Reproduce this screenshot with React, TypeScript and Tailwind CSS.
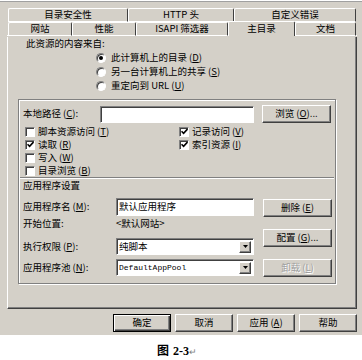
import type { ReactNode } from 'react'

const raised =
  'border border-t-white border-l-white border-r-[#404040] border-b-[#404040] shadow-[inset_-1px_-1px_0_#808080]'
const sunken =
  'border border-t-[#808080] border-l-[#808080] border-r-white border-b-white shadow-[inset_1px_1px_0_#404040]'

function Mn({ k }: { k: string }) {
  return (
    <span className="ml-[2px]">
      (<span className="underline">{k}</span>)
    </span>
  )
}

function Tab({ label, w, active }: { label: string; w: string; active?: boolean }) {
  return (
    <div
      className={`${w} flex h-[14px] shrink-0 items-center justify-center rounded-t-[2px] border-l border-r border-t border-l-white border-r-[#404040] border-t-white ${
        active ? 'relative -mt-[1px] h-[15px] bg-[#d4d0c8]' : 'border-b border-b-white'
      }`}
    >
      {label}
    </div>
  )
}

function Radio({ checked, children }: { checked?: boolean; children: ReactNode }) {
  return (
    <div className="flex h-[14px] items-center gap-[5px]">
      <span
        className={`flex h-[10px] w-[10px] items-center justify-center rounded-full bg-white ${sunken}`}
      >
        {checked && <span className="h-[4px] w-[4px] rounded-full bg-black" />}
      </span>
      <span>{children}</span>
    </div>
  )
}

function Check({ checked, children }: { checked?: boolean; children?: ReactNode }) {
  if (!children) return <div className="h-[13px]" />
  return (
    <div className="flex h-[13px] items-center gap-[3px]">
      <span className={`flex h-[10px] w-[10px] items-center justify-center bg-white ${sunken}`}>
        {checked && (
          <svg width="7" height="7" viewBox="0 0 7 7">
            <path d="M0.5 3.2 L2.6 5.4 L6.5 1" stroke="#000" strokeWidth="1.6" fill="none" />
          </svg>
        )}
      </span>
      <span>{children}</span>
    </div>
  )
}

function Button({
  children,
  w = 'w-[69px]',
  disabled,
  isDefault,
}: {
  children: ReactNode
  w?: string
  disabled?: boolean
  isDefault?: boolean
}) {
  return (
    <div
      className={`${w} flex h-[18px] shrink-0 items-center justify-center ${
        isDefault
          ? 'border border-black shadow-[inset_1px_1px_0_white,inset_-1px_-1px_0_#404040,inset_-2px_-2px_0_#808080]'
          : raised
      } ${disabled ? 'text-[#a0a0a0] [text-shadow:1px_1px_0_white]' : ''}`}
    >
      {children}
    </div>
  )
}

function Select({ value, mono }: { value: string; mono?: boolean }) {
  return (
    <div className={`flex h-[17px] w-[138px] items-center bg-white pl-[2px] pr-[2px] ${sunken}`}>
      <span
        className={`flex-1 whitespace-nowrap leading-[13px] ${mono ? "font-['Liberation_Mono',monospace] text-[8px]" : ''}`}
      >
        {value}
      </span>
      <span className={`flex h-[12px] w-[12px] items-center justify-center bg-[#d4d0c8] ${raised}`}>
        <svg width="5" height="3" viewBox="0 0 5 3">
          <path d="M0 0 H5 L2.5 3 Z" fill="#000" />
        </svg>
      </span>
    </div>
  )
}

export default function App() {
  return (
    <div className="h-[360px] w-[362px] bg-white font-['Noto_Sans_CJK_SC','Noto_Sans',sans-serif] text-[9.5px] leading-none text-black">
      <div className="mt-[1px] border-t border-[#a0a0a0] bg-[#d4d0c8] pb-[3px] pt-[6px]">
        {/* tab rows */}
        <div className="ml-[8px] flex">
          <Tab label="目录安全性" w="w-[120px]" />
          <Tab label="HTTP 头" w="w-[106px]" />
          <Tab label="自定义错误" w="w-[122px]" />
        </div>
        <div className="ml-[7px] flex w-[350px]">
          <div className="w-[1px] border-b border-b-white" />
          <Tab label="网站" w="w-[64px]" />
          <Tab label="性能" w="w-[64px]" />
          <Tab label="ISAPI 筛选器" w="w-[92px]" />
          <Tab label="主目录" w="w-[67px]" active />
          <Tab label="文档" w="w-[61px]" />
          <div className="flex-1 border-b border-b-white" />
        </div>

        {/* panel */}
        <div className="ml-[7px] h-[272px] w-[350px] border-b border-l border-r border-b-[#404040] border-l-white border-r-[#404040] shadow-[inset_-1px_-1px_0_#808080]">
          <div className="mt-[1px] flex h-[14px] items-center pl-[18px]">此资源的内容来自:</div>
          <div className="pl-[88px]">
            <Radio checked>
              此计算机上的目录<Mn k="D" />
            </Radio>
            <Radio>
              另一台计算机上的共享<Mn k="S" />
            </Radio>
            <Radio>
              重定向到 URL<Mn k="U" />
            </Radio>
          </div>

          {/* group box */}
          <div className="ml-[10px] mt-[6px] w-[318px] border border-[#808080] px-[4px] pb-[6px] pt-[5px] shadow-[inset_1px_1px_0_white,1px_1px_0_white]">
            <div className="flex h-[18px] items-center">
              <span className="w-[77px]">
                本地路径<Mn k="C" />:
              </span>
              <div className={`h-[17px] w-[155px] bg-white ${sunken}`} />
              <div className="ml-[8px]">
                <Button>
                  浏览<Mn k="O" />
                  ...
                </Button>
              </div>
            </div>

            <div className="mt-[2px] grid grid-cols-[154px_1fr] pl-[2px]">
              <Check>
                脚本资源访问<Mn k="T" />
              </Check>
              <Check checked>
                记录访问<Mn k="V" />
              </Check>
              <Check checked>
                读取<Mn k="R" />
              </Check>
              <Check checked>
                索引资源<Mn k="I" />
              </Check>
              <Check>
                写入<Mn k="W" />
              </Check>
              <Check />
              <Check>
                目录浏览<Mn k="B" />
              </Check>
              <Check />
            </div>

            <div className="-mx-[3px] h-[2px] border-b border-t border-b-white border-t-[#808080]" />
            <div className="flex h-[13px] items-center">应用程序设置</div>

            <div className="mt-[6px] flex">
              <div className="flex w-[231px] flex-col">
                <div className="flex h-[18px] items-center">
                  <span className="w-[93px]">
                    应用程序名<Mn k="M" />:
                  </span>
                  <div className={`flex h-[18px] w-[138px] items-center bg-white pl-[2px] ${sunken}`}>
                    默认应用程序
                  </div>
                </div>
                <div className="mt-[2px] flex h-[12px] items-center">
                  <span className="w-[93px]">开始位置:</span>
                  <span>&lt;默认网站&gt;</span>
                </div>
                <div className="mt-[8px] flex h-[17px] items-center">
                  <span className="w-[93px]">
                    执行权限<Mn k="P" />:
                  </span>
                  <Select value="纯脚本" />
                </div>
                <div className="mt-[4px] flex h-[17px] items-center">
                  <span className="w-[93px]">
                    应用程序池<Mn k="N" />:
                  </span>
                  <Select value="DefaultAppPool" mono />
                </div>
              </div>
              <div className="ml-[9px] flex flex-col gap-[12px] pt-[1px]">
                <Button>
                  删除<Mn k="E" />
                </Button>
                <Button>
                  配置<Mn k="G" />
                  ...
                </Button>
                <Button disabled>
                  卸载<Mn k="L" />
                </Button>
              </div>
            </div>
          </div>
        </div>

        {/* dialog buttons */}
        <div className="mt-[5px] flex justify-end gap-[4px] pr-[5px]">
          <Button w="w-[58px]" isDefault>
            确定
          </Button>
          <Button w="w-[58px]">取消</Button>
          <Button w="w-[58px]">
            应用<Mn k="A" />
          </Button>
          <Button w="w-[58px]">帮助</Button>
        </div>
      </div>

      <div className="mt-[9px] flex items-baseline justify-center pr-[8px] font-['Liberation_Serif',serif] text-[12px] font-bold">
        <span className="font-['Noto_Sans_CJK_SC',sans-serif]">图</span>
        <span className="ml-[4px]">2-3</span>
        <span className="text-[9px] font-normal text-[#808080]">↵</span>
      </div>
    </div>
  )
}
